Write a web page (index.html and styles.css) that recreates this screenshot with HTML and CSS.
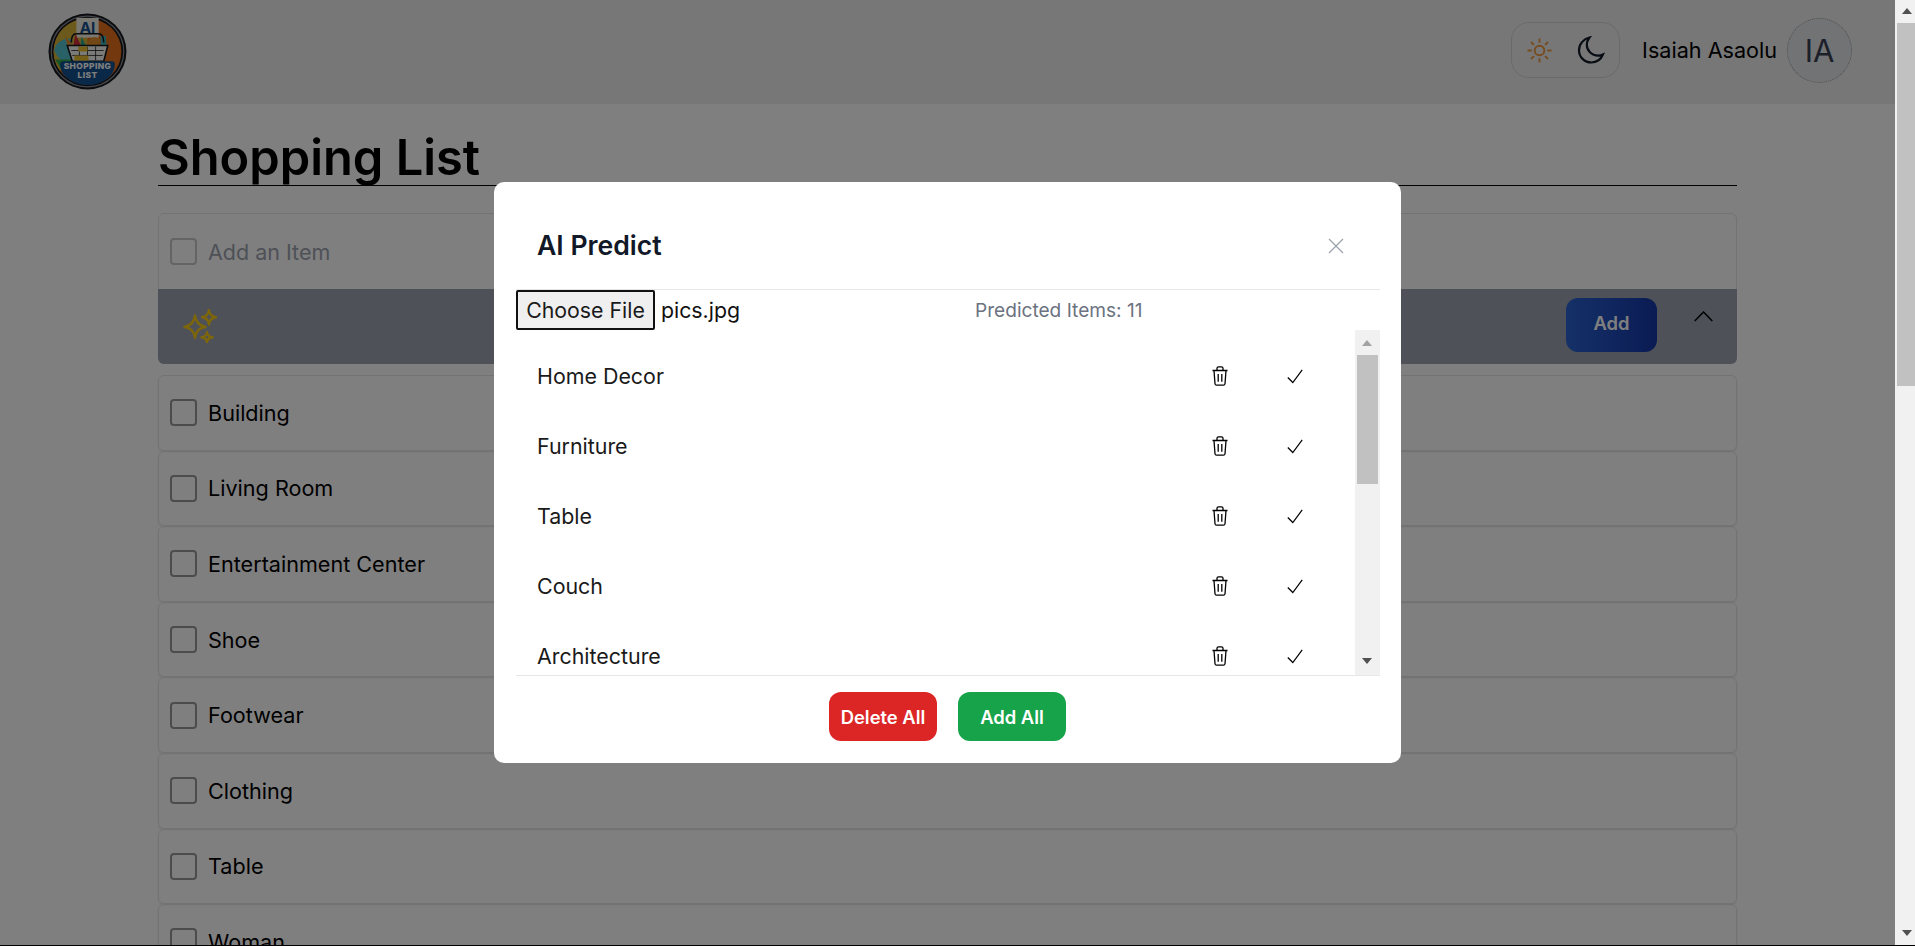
FILE: index.html
```html
<!DOCTYPE html>
<html lang="en">
<head>
<meta charset="utf-8">
<title>Shopping List</title>
<link rel="stylesheet" href="styles.css">
</head>
<body>
<div class="page">
  <div class="viewport">
    <header class="topbar">
      <svg class="logo" viewBox="0 0 78 78" preserveAspectRatio="none" aria-label="AI Shopping List logo">
        <circle cx="39" cy="39" r="38.500" fill="#15181d"/>
        <circle cx="39" cy="39" r="35.800" fill="none" stroke="#8a8d94" stroke-width="1.200"/>
        <circle cx="39" cy="39" r="33.500" fill="#e8701c"/>
        <path d="M39 5.500A33.500 33.500 0 0 0 5.500 39a33.500 33.500 0 0 0 6 19h27.500z" fill="#d9b53a"/>
        <path d="M6 38a15 15 0 0 1 16-12l8 22H13a30 30 0 0 1-7-10z" fill="#52c2cf"/>
        <path d="M7 47h24v10H13z" fill="#37a84a"/>
        <rect x="28" y="5" width="22" height="20" fill="#f4f1e6"/>
        <text x="39" y="20" class="logo-ai">AI</text>
        <path d="M17 23l8 10h-6zM40 28c4-5 10-4 12 0l-2 6H38z" fill="#e2902c"/>
        <path d="M27 21l6 13h-8z" fill="#d32f3a"/>
        <path d="M33 24l5 10h-6z" fill="#2fa58f"/>
        <path d="M52 23h5l1 11h-6z" fill="#3fb6bd"/>
        <path d="M19 33h40l-4 16H24z" fill="#f7f7f2" stroke="#15181d" stroke-width="1.600"/>
        <path d="M23 38h32M24 43h30M31 34v14M39 34v14M47 34v14" stroke="#15181d" stroke-width=".8"/>
        <path d="M26 48v-5h14v5zM30 34h9v5h-9z" fill="#edc02f"/>
        <path d="M23 30c0-6 2-9 5-9h22c3 0 5 3 5 9" fill="none" stroke="#15181d" stroke-width="1.600"/>
        <path d="M12 52a3 3 0 0 1 3-3h48a3 3 0 0 1 3 3c0 6-3 11-7 14a32 32 0 0 1-40 0c-4-3-7-8-7-14z" fill="#14508f"/>
        <text x="39" y="57" class="logo-text">SHOPPING</text>
        <text x="39" y="65.500" class="logo-text">LIST</text>
      </svg>
      <div class="user-area">
        <div class="theme-toggle">
          <svg class="sun" viewBox="0 0 28 28"><circle cx="14" cy="14" r="5"/><path d="M14 1.500v4.500M14 22v4.500M1.500 14H6M22 14h4.500M5.200 5.200l3 3M19.800 19.800l3 3M5.200 22.800l3-3M19.800 8.200l3-3"/></svg>
          <svg class="moon" viewBox="0 0 28 28"><path d="M12.500 1.500C6.500 3 2 8.200 2 14.200 2 21 7.500 26.500 14.300 26.500c5.300 0 9.800-3.300 11.600-8-1.500.8-3 1.200-4.700 1.200-6.800 0-11.400-5.300-11.400-11 0-2.500.9-4.800 2.700-7.200z"/></svg>
        </div>
        <span class="user-name">Isaiah Asaolu</span>
        <div class="avatar">IA</div>
      </div>
    </header>

    <main class="content">
      <h1 class="title">Shopping List</h1>
      <section class="add-card">
        <div class="add-row">
          <span class="check check-light"></span>
          <span class="placeholder">Add an Item</span>
        </div>
        <div class="ai-row">
          <svg class="sparkles" viewBox="0 0 34 34">
            <path d="M12 6.500Q13 16 22.500 18 13 19 12 29 11 19 1.500 18 11 16 12 6.500z"/>
            <path d="M26 1Q26.500 7 33 8.200 26.500 9 26 15.500 25.500 9 19 8.200 25.500 7 26 1z"/>
            <path d="M24 23Q24.300 27.500 29.500 28.300 24.300 29 24 33.500 23.700 29 18.500 28.300 23.700 27.500 24 23z"/>
          </svg>
          <div class="ai-actions">
            <button class="add-btn" type="button">Add</button>
            <svg class="chevron" viewBox="0 0 19 11"><path d="M.7 10L9.500 1l8.800 9"/></svg>
          </div>
        </div>
      </section>
      <ul class="items">
        <li class="item"><span class="check"></span>Building</li>
        <li class="item"><span class="check"></span>Living Room</li>
        <li class="item"><span class="check"></span>Entertainment Center</li>
        <li class="item"><span class="check"></span>Shoe</li>
        <li class="item"><span class="check"></span>Footwear</li>
        <li class="item"><span class="check"></span>Clothing</li>
        <li class="item"><span class="check"></span>Table</li>
        <li class="item"><span class="check"></span>Woman</li>
      </ul>
    </main>

    <div class="overlay">
      <div class="modal">
        <div class="modal-head">
          <h2 class="modal-title">AI Predict</h2>
          <svg class="close" viewBox="0 0 16 16"><path d="M1 1l14 14M15 1L1 15"/></svg>
        </div>
        <div class="file-row">
          <button class="file-btn" type="button">Choose File</button>
          <span class="file-name">pics.jpg</span>
          <span class="predicted">Predicted Items: 11</span>
        </div>
        <div class="scroll-area">
          <ul class="predictions">
            <li class="prediction"><span class="prediction-name">Home Decor</span>
              <svg class="trash" viewBox="0 0 16 20"><path d="M.5 4.500h15M2 4.500l1 13.200c.1.900.7 1.500 1.600 1.500h6.800c.9 0 1.500-.6 1.600-1.500l1-13.200M5 4.500V2.300C5 1.400 5.600.8 6.500.8h3c.9 0 1.500.6 1.500 1.500v2.200M6.200 8v7.800M9.800 8v7.800"/></svg>
              <svg class="tick" viewBox="0 0 16 15"><path d="M.8 8.500l5 5L15.200.8"/></svg></li>
            <li class="prediction"><span class="prediction-name">Furniture</span>
              <svg class="trash" viewBox="0 0 16 20"><path d="M.5 4.500h15M2 4.500l1 13.200c.1.900.7 1.500 1.600 1.500h6.800c.9 0 1.500-.6 1.600-1.500l1-13.200M5 4.500V2.300C5 1.400 5.600.8 6.500.8h3c.9 0 1.500.6 1.500 1.500v2.200M6.200 8v7.800M9.800 8v7.800"/></svg>
              <svg class="tick" viewBox="0 0 16 15"><path d="M.8 8.500l5 5L15.200.8"/></svg></li>
            <li class="prediction"><span class="prediction-name">Table</span>
              <svg class="trash" viewBox="0 0 16 20"><path d="M.5 4.500h15M2 4.500l1 13.200c.1.900.7 1.500 1.600 1.500h6.800c.9 0 1.500-.6 1.600-1.500l1-13.200M5 4.500V2.300C5 1.400 5.600.8 6.500.8h3c.9 0 1.500.6 1.500 1.500v2.200M6.200 8v7.800M9.800 8v7.800"/></svg>
              <svg class="tick" viewBox="0 0 16 15"><path d="M.8 8.500l5 5L15.200.8"/></svg></li>
            <li class="prediction"><span class="prediction-name">Couch</span>
              <svg class="trash" viewBox="0 0 16 20"><path d="M.5 4.500h15M2 4.500l1 13.200c.1.900.7 1.500 1.600 1.500h6.800c.9 0 1.500-.6 1.600-1.500l1-13.200M5 4.500V2.300C5 1.400 5.600.8 6.500.8h3c.9 0 1.500.6 1.500 1.500v2.200M6.200 8v7.800M9.800 8v7.800"/></svg>
              <svg class="tick" viewBox="0 0 16 15"><path d="M.8 8.500l5 5L15.200.8"/></svg></li>
            <li class="prediction"><span class="prediction-name">Architecture</span>
              <svg class="trash" viewBox="0 0 16 20"><path d="M.5 4.500h15M2 4.500l1 13.200c.1.900.7 1.500 1.600 1.500h6.800c.9 0 1.500-.6 1.600-1.500l1-13.200M5 4.500V2.300C5 1.400 5.600.8 6.500.8h3c.9 0 1.500.6 1.500 1.500v2.200M6.200 8v7.800M9.800 8v7.800"/></svg>
              <svg class="tick" viewBox="0 0 16 15"><path d="M.8 8.500l5 5L15.200.8"/></svg></li>
          </ul>
          <div class="inner-scrollbar">
            <span class="arrow-up arrow-faint"></span>
            <span class="inner-thumb"></span>
            <span class="arrow-down"></span>
          </div>
        </div>
        <div class="modal-foot">
          <button class="foot-btn delete-all" type="button">Delete All</button>
          <button class="foot-btn add-all" type="button">Add All</button>
        </div>
      </div>
    </div>
  </div>
  <div class="page-scrollbar">
    <span class="arrow-up"></span>
    <span class="page-thumb"></span>
    <span class="arrow-down"></span>
  </div>
</div>
</body>
</html>
```
FILE: styles.css
```css
* { box-sizing: border-box; }
html, body { margin: 0; height: 100%; overflow: hidden; }
body { background: #000; font-family: Inter, "Liberation Sans", sans-serif; color: #000; }
ul { list-style: none; margin: 0; padding: 0; }
button { font-family: inherit; cursor: pointer; }

.page { display: flex; height: calc(100vh - 1px); background: #fff; }
.viewport { position: relative; flex: 1; min-width: 0; overflow: hidden; background: #fff; }

.topbar { display: flex; align-items: center; justify-content: space-between; height: 104px; padding: 0 43px 4px 48px; background: #efefef; }
.logo { width: 79px; height: 77px; margin-top: 2px; display: block; }
.logo-ai { font: 700 15px Inter, sans-serif; fill: #14508f; text-anchor: middle; }
.logo-text { font: 800 8.300px Inter, sans-serif; fill: #fff; text-anchor: middle; letter-spacing: .4px; }
.user-area { display: flex; align-items: center; }
.theme-toggle { display: flex; align-items: center; justify-content: space-between; width: 109px; height: 56px; padding: 0 14px 0 14px; border: 1px solid #d4d4d4; border-radius: 18px; margin-right: 22px; }
.sun { width: 27px; height: 27px; fill: none; stroke: #f0973f; stroke-width: 2; }
.moon { width: 28px; height: 28px; fill: none; stroke: #111827; stroke-width: 2.200; }
.user-name { font-size: 21.600px; font-weight: 400; margin-right: 10px; }
.avatar { display: flex; align-items: center; justify-content: center; width: 65px; height: 65px; border: 1px dotted #999; border-radius: 50%; background: #e5e7eb; color: #374151; font-size: 31px; }

.content { width: 1579px; margin: 0 auto; padding-top: 30px; }
.title { margin: 0 0 27px; padding-bottom: 3px; border-bottom: 1px solid #000; font-size: 48.800px; line-height: 48px; font-weight: 600; height: 52px; }

.add-card { border: 1px solid #e5e7eb; border-radius: 6px; }
.add-row { display: flex; align-items: center; gap: 11px; height: 75px; padding-left: 11px; }
.placeholder { font-size: 21.500px; color: #9ca3af; }
.ai-row { display: flex; align-items: center; justify-content: space-between; height: 75px; margin: 0 -1px -1px; padding: 0 24px 0 25px; background: #9ca3af; border-radius: 0 0 6px 6px; }
.sparkles { width: 34px; height: 34px; margin-bottom: 2px; fill: none; stroke: #facc15; stroke-width: 2.400; stroke-linejoin: round; }
.ai-actions { display: flex; align-items: flex-start; gap: 37px; padding-bottom: 4px; }
.add-btn { width: 91px; height: 54px; border: 0; border-radius: 12px; background: linear-gradient(90deg, #2a62d0, #1636a8); color: #fff; font-size: 18.400px; font-weight: 600; padding: 0 0 4px; }
.chevron { width: 19px; height: 11px; margin-top: 13px; fill: none; stroke: #000; stroke-width: 1.500; }

.check { flex: none; display: block; width: 27px; height: 27px; border: 2px solid #999; border-radius: 4px; }
.check-light { border-color: #c9c9c9; }

.items { margin-top: 11px; }
.item { display: flex; align-items: center; gap: 11px; height: 75.600px; padding-left: 11px; border: 1px solid #e5e7eb; border-radius: 6px; box-shadow: 0 1px 2px rgba(0,0,0,.1); font-size: 21.600px; }

.overlay { position: absolute; inset: 0; display: flex; align-items: center; justify-content: center; background: rgba(0,0,0,.5); }
.modal { width: 907px; height: 581px; padding: 0 21px 0 22px; background: #fff; border-radius: 10px; }
.modal-head { display: flex; align-items: center; justify-content: space-between; height: 108px; padding: 47px 36px 28px 21px; border-bottom: 1px solid #e5e7eb; }
.modal-title { margin: 0; font-size: 26.600px; line-height: 32px; font-weight: 600; color: #111827; }
.close { width: 16px; height: 16px; margin-top: 2px; fill: none; stroke: #9ca3af; stroke-width: 1.300; }

.file-row { display: flex; align-items: center; height: 40px; }
.file-btn { width: 139px; height: 40px; padding: 0; border: 2px solid #111; border-radius: 2px; background: #efefef; color: #1a1a1a; font-size: 21.300px; }
.file-name { width: 320px; padding-left: 6px; font-size: 21.300px; color: #111; }
.predicted { font-size: 19.100px; color: #6b7280; }

.scroll-area { display: flex; height: 345px; }
.predictions { flex: 1; min-width: 0; padding-top: 11px; overflow: hidden; }
.prediction { display: flex; align-items: center; height: 70.100px; padding-left: 21px; font-size: 21.400px; color: #1a1a1a; }
.prediction-name { width: 675px; }
.trash { width: 16px; height: 20px; fill: none; stroke: #000; stroke-width: 1.300; }
.tick { width: 16px; height: 15px; margin-left: 59px; fill: none; stroke: #000; stroke-width: 1.200; }

.inner-scrollbar { position: relative; flex: none; width: 25px; background: #f1f1f1; }
.inner-thumb { position: absolute; top: 25px; left: 2px; right: 2px; height: 129px; background: #c1c1c1; }
.arrow-up, .arrow-down { position: absolute; left: 50%; margin-left: -5.500px; width: 0; height: 0; border-left: 5.500px solid transparent; border-right: 5.500px solid transparent; }
.arrow-up { top: 10px; border-bottom: 6px solid #505050; }
.arrow-down { bottom: 11px; border-top: 6px solid #505050; }
.arrow-faint { border-bottom-color: #a3a3a3; }

.modal-foot { display: flex; gap: 21px; padding: 16px 0 0 313px; border-top: 1px solid #e5e7eb; }
.foot-btn { width: 108px; height: 49px; padding: 0; border: 0; border-radius: 12px; color: #fff; font-size: 18.400px; font-weight: 600; }
.delete-all { background: #dc2626; }
.add-all { background: #16a34a; }

.page-scrollbar { position: relative; flex: none; width: 20px; background: #f1f1f1; }
.page-thumb { position: absolute; top: 23px; left: 2px; right: 0; height: 363px; background: #c1c1c1; }
.page-scrollbar .arrow-up { top: 8px; left: 12px; }
.page-scrollbar .arrow-down { bottom: 9px; left: 12px; }
```
